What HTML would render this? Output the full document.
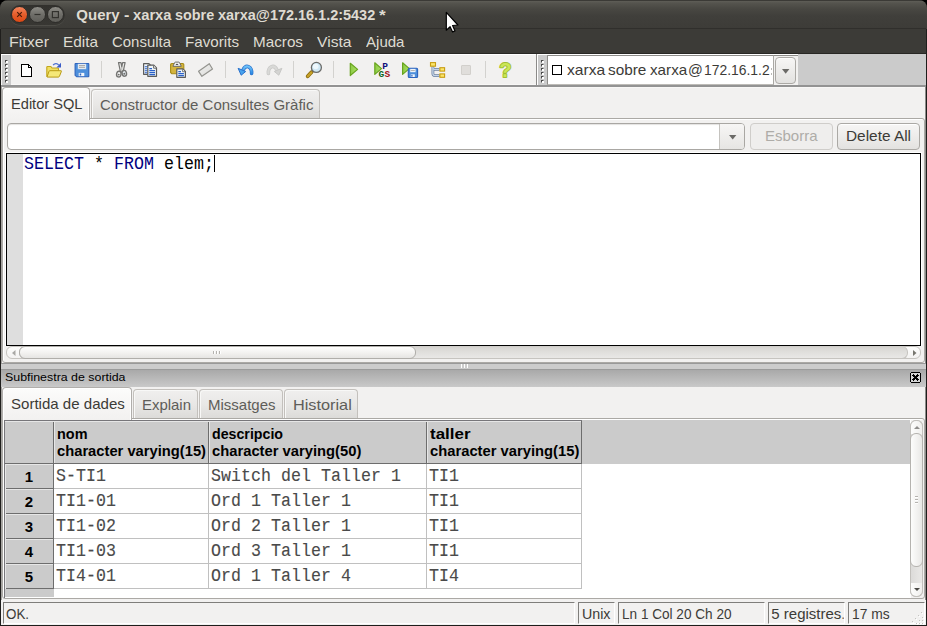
<!DOCTYPE html>
<html>
<head>
<meta charset="utf-8">
<title>Query - xarxa sobre xarxa@172.16.1.2:5432 *</title>
<style>
*{box-sizing:border-box;margin:0;padding:0}
html,body{width:927px;height:626px;overflow:hidden;background:#000}
body{position:relative;font-family:"Liberation Sans",sans-serif;font-size:15px;color:#3c3b37}
.a{position:absolute}
.t{position:absolute;white-space:nowrap;line-height:1;transform-origin:0 0}
svg{position:absolute;overflow:visible}
#frame{left:0;top:0;width:927px;height:626px;background:#1f1e1c;border-radius:8px 8px 0 0}
#title{left:0;top:0;width:927px;height:29px;background:linear-gradient(#3b3a36 0,#3b3a36 1px,#5f5e57 1px,#55544e 3px,#484742 9px,#403f3b 16px,#3d3c38 28px);border-radius:8px 8px 0 0}
#tsep{left:1px;top:28px;width:925px;height:2px;background:linear-gradient(#302f2c 50%,#42413c 50%)}
#menubar{left:1px;top:29px;width:925px;height:25px;background:#3c3b37;border-bottom:1px solid #282724}
#pill{left:10px;top:5px;width:55px;height:20px;border-radius:10px;background:linear-gradient(#32312d,#383733);box-shadow:0 1px 0 #4d4c47}
.wb{position:absolute;top:6px;width:17px;height:17px;border-radius:50%;border:1px solid #2e2d2a}
#wclose{left:11px;background:linear-gradient(#f4845c,#e55e2c 50%,#dd4814)}
#wmin,#wmax{background:linear-gradient(#8d8c86,#6f6e69 50%,#5f5e59)}
#wmin{left:29px}#wmax{left:47px}
/* toolbar */
#toolbar{left:1px;top:54px;width:925px;height:31px;background:#f2f1f0;border-top:1px solid #fff;border-bottom:1px solid #f8f7f6}
.grip{position:absolute;top:55px;width:9px;height:30px;background:#cbcbcb}
.grip i{position:absolute;left:3px;width:3px;height:3px;background:#fff;border-top:1px solid #4a4a4a;border-left:1px solid #4a4a4a}
.grip i:after{content:'';position:absolute;left:1px;top:-1px;width:1px;height:1px;background:#999;box-shadow:-2px 2px 0 #999}
#tbgrey{left:798px;top:54px;width:128px;height:32px;background:#cbcbcb}
#tbline{left:1px;top:85px;width:925px;height:2px;background:#939393}
.sep{position:absolute;top:61px;width:1px;height:17px;background:#d3d2cf}
#client{left:1px;top:87px;width:925px;height:538px;background:#f2f1f0;border-top:1px solid #f8f7f6}
/* notebook */
.nb{position:absolute;border:1px solid #aba9a5;border-radius:0 3px 3px 3px;background:#f2f1f0;box-shadow:inset 1px 1px 0 #fff}
.tab{position:absolute;border:1px solid #b0aeab;border-bottom:none;border-radius:4px 4px 0 0}
.tab.on{background:linear-gradient(#fcfcfb,#f6f5f4 60%,#f2f1f0);box-shadow:inset 1px 1px 0 #fff,inset -1px 0 0 #fff}
.tab.off{background:linear-gradient(#f0efee,#e9e8e6 50%,#dcdbd9);border-color:#c3c0bc;box-shadow:inset 1px 1px 0 #f8f8f7}
.btn{position:absolute;border:1px solid #aba9a5;border-radius:4px;background:linear-gradient(#f7f6f5,#e3e2e0);box-shadow:inset 0 1px 0 #fff}
.btn.dis{background:#efeeed;border-color:#cfcdca;box-shadow:none}
.field{position:absolute;border-top:1px solid #7f7e7b;border-left:1px solid #7f7e7b;border-right:1px solid #fff;border-bottom:1px solid #fff;top:602px;height:22px}
.cell{font-family:"Liberation Mono",monospace;font-size:16.6px;letter-spacing:.04px;color:#4a4a4a;transform:scaleY(1.07);-webkit-text-stroke:.12px #4a4a4a}

</style>
</head>
<body>
<div class="a" id="frame"></div>
<div class="a" id="title"></div>
<div class="a" id="tsep"></div>
<div class="a" id="pill"></div>
<div class="wb" id="wclose"></div><div class="wb" id="wmin"></div><div class="wb" id="wmax"></div>
<svg style="left:12px;top:7px" width="52" height="15" viewBox="0 0 52 15">
<path d="M5.200 5.200l4.600 4.600M9.800 5.200l-4.600 4.600" stroke="#4a1a08" stroke-width="1.200" fill="none"/>
<path d="M22.500 7.500h6" stroke="#33322e" stroke-width="1.200" fill="none"/>
<rect x="40.400" y="4.600" width="6" height="6" stroke="#33322e" stroke-width="1.200" fill="none"/>
</svg>
<div class="a" id="menubar"></div>
<div class="a" id="toolbar"></div>
<div class="a" id="tbgrey"></div>
<div class="a" id="tbline"></div>
<div class="grip" style="left:2px"><i style="top:5px"></i><i style="top:9px"></i><i style="top:13px"></i><i style="top:17px"></i><i style="top:21px"></i><i style="top:25px"></i></div>
<div class="a" id="client"></div>
<!-- toolbar icons: each svg is a 16x16 box -->
<svg style="left:19px;top:62px" width="16" height="16" viewBox="0 0 16 16"><path d="M2.500 2.500h7l3 3v9h-10z" fill="#fff"/><g fill="#000" shape-rendering="crispEdges"><rect x="2" y="2" width="1" height="13"/><rect x="2" y="14" width="11" height="1"/><rect x="12" y="5" width="1" height="10"/><rect x="2" y="2" width="8" height="1"/><rect x="9" y="2" width="1" height="4"/><rect x="9" y="5" width="4" height="1"/><rect x="10" y="3" width="1" height="1"/><rect x="11" y="4" width="1" height="1"/></g></svg>
<svg style="left:46px;top:62px" width="16" height="16" viewBox="0 0 16 16">
<path d="M.8 14.800V5.300q0-.8.8-.8h3.200l1.300 1.500h5.600q.8 0 .8.800v2" fill="#f0df62" stroke="#c2a51c" stroke-width="1.100"/>
<path d="M1 15l2-5.700q.2-.6.900-.6h11q.8 0 .5.700l-2 5q-.3.700-1 .700h-10.600q-1 0-.8-.1z" fill="#f5e878" stroke="#b89a14" stroke-width="1"/>
<path d="M7.200 3.200c1.300-2 4.200-2.200 5.400-.2" fill="none" stroke="#4a6fd0" stroke-width="1.400"/><path d="M15 .8v4.600h-4.600z" fill="#3a5cc8"/>
</svg>
<svg style="left:74px;top:62px" width="16" height="16" viewBox="0 0 16 16">
<path d="M1.600 1.500h12.700q.5 0 .5.500v12.300q0 .5-.5.500h-11.600l-1.600-1.500v-11.300q0-.5.500-.5z" fill="#4d8fdb" stroke="#2d63bd" stroke-width="1.100"/>
<rect x="4" y="2" width="8" height="5" fill="#eef3f8" stroke="#c5d4e6" stroke-width=".5"/><path d="M5 3.600h6M5 5.300h6" stroke="#9a9a9a" stroke-width=".9"/>
<rect x="4.700" y="10.900" width="5.600" height="3.200" fill="#f2f5fa"/><rect x="5.700" y="11.500" width="1.500" height="2" fill="#2d63bd"/>
</svg>
<div class="sep" style="left:101px"></div>
<!-- cut -->
<svg style="left:114px;top:62px" width="16" height="16" viewBox="0 0 16 16">
<path d="M4.500 .6h2.500l.8 4.400.8-4.400h2.500l-1.600 7.600v1.800h-3.400v-1.800z" fill="#eeeeec" stroke="#747472" stroke-width="1.200" stroke-linejoin="round"/>
<path d="M7.800 5v4.500" stroke="#a8a8a6" stroke-width=".8"/>
<ellipse cx="4.800" cy="12.100" rx="2.200" ry="2.900" fill="#f6f6f5" stroke="#747472" stroke-width="1.400" transform="rotate(12 4.800 12.100)"/>
<ellipse cx="10.300" cy="11.300" rx="2.200" ry="2.900" fill="#e6edf1" stroke="#747472" stroke-width="1.400" transform="rotate(-12 10.300 11.300)"/>
<circle cx="4.700" cy="12.600" r=".95" fill="#6e6e6c"/><circle cx="10.300" cy="11.700" r=".95" fill="#6e6e6c"/>
</svg>
<!-- copy -->
<svg style="left:142px;top:62px" width="16" height="16" viewBox="0 0 16 16">
<path d="M1.600 1.700h5.400l1.400 1.400v9.200h-6.800z" fill="#f0f6fa" stroke="#5c5c5a" stroke-width="1.200" stroke-linejoin="round"/><path d="M2.800 4.800h3M2.800 6.800h2.500M2.800 8.800h2.500M2.800 10.700h2.500" stroke="#2c62c8" stroke-width="1.100"/>
<path d="M5.800 3.200h6l2.700 2.700v8.400h-8.700z" fill="#eef5f9" stroke="#5c5c5a" stroke-width="1.200" stroke-linejoin="round"/><path d="M11.600 3.500v2.700h2.700" fill="#fff" stroke="#5c5c5a" stroke-width=".9"/>
<path d="M7.300 6.700h2.700M7.300 8.700h5.700M7.300 10.700h5.700M7.300 12.700h5.700" stroke="#2c62c8" stroke-width="1.200"/>
</svg>
<!-- paste -->
<svg style="left:170px;top:62px" width="16" height="16" viewBox="0 0 16 16">
<path d="M1.800 1.500h11q1 0 1 1v8.200l-1 1h-11l-1.200-1.200v-8q0-1 1.200-1z" fill="#d4b43c" stroke="#a88c18" stroke-width="1.100"/>
<path d="M2.900 4.300l1.800-3.800q.2-.4.700-.4h3.400q.5 0 .7.400l1.800 3.800z" fill="#f4f4f3" stroke="#6a6a68" stroke-width="1" stroke-linejoin="round"/><ellipse cx="7" cy="2.400" rx="1.300" ry=".7" fill="#555"/>
<path d="M6.800 6.900h6l2.600 2.600v5.800h-8.600z" fill="#eef5f9" stroke="#5c5c5a" stroke-width="1.200" stroke-linejoin="round"/><path d="M12.600 7.200v2.500h2.500" fill="#fff" stroke="#5c5c5a" stroke-width=".8"/>
<path d="M8.300 9.700h2.700M8.300 11.600h5.600M8.300 13.600h5.600" stroke="#2c62c8" stroke-width="1.200"/>
</svg>
<!-- eraser -->
<svg style="left:197px;top:62px" width="16" height="16" viewBox="0 0 16 16"><defs><linearGradient id="erg" x1="0" y1="0" x2="1" y2="1"><stop offset="0" stop-color="#f0f0ee"/><stop offset="1" stop-color="#dcdcda"/></linearGradient></defs><path d="M1.600 9.300l10.700-7.600 3.200 5.300-10.600 7.300z" fill="url(#erg)" stroke="#94948f" stroke-width="1.200" stroke-linejoin="round"/></svg>
<div class="sep" style="left:225px"></div>
<!-- undo / redo -->
<svg style="left:237px;top:62px" width="17" height="16" viewBox="0 0 17 16"><defs><linearGradient id="ug" x1="0" y1="0" x2="0" y2="1"><stop offset="0" stop-color="#6cc0f8"/><stop offset="1" stop-color="#2c8ce4"/></linearGradient></defs>
<path d="M14.600 11.400C15 5 9.300 1.400 6 8" fill="none" stroke="#2c72cc" stroke-width="3.600" stroke-linecap="round"/>
<path d="M14.600 11.400C15 5 9.300 1.400 6 8" fill="none" stroke="url(#ug)" stroke-width="2.200" stroke-linecap="round"/>
<path d="M1.100 6.300l7.600 3.200-4.500 3.700z" fill="#48a4ee" stroke="#2c72cc" stroke-width="1" stroke-linejoin="round"/></svg>
<svg style="left:266px;top:62px" width="17" height="16" viewBox="0 0 17 16"><g transform="translate(17,0) scale(-1,1)">
<path d="M14.600 11.400C15 5 9.300 1.400 6 8" fill="none" stroke="#c8c8c6" stroke-width="3.600" stroke-linecap="round"/>
<path d="M14.600 11.400C15 5 9.300 1.400 6 8" fill="none" stroke="#d9d9d7" stroke-width="2.200" stroke-linecap="round"/>
<path d="M1.100 6.300l7.600 3.200-4.500 3.700z" fill="#d4d4d2" stroke="#c8c8c6" stroke-width="1" stroke-linejoin="round"/></g></svg>
<div class="sep" style="left:293px"></div>
<!-- find -->
<svg style="left:306px;top:62px" width="16" height="16" viewBox="0 0 16 16">
<path d="M6.600 9.200l-1.400 1.500" stroke="#8c8c88" stroke-width="3" stroke-linecap="butt"/>
<path d="M5.400 10.300l-3.700 4" stroke="#8a6c10" stroke-width="3.800" stroke-linecap="round"/><path d="M5.300 10.500l-3.500 3.700" stroke="#c8a228" stroke-width="2.300" stroke-linecap="round"/>
<circle cx="10.400" cy="5.400" r="5" fill="#cfe8f5" stroke="#6c6c6a" stroke-width="1.300"/><circle cx="9.700" cy="4.500" r="2.800" fill="#eef8fd"/>
</svg>
<div class="sep" style="left:333px"></div>
<!-- execute -->
<svg style="left:346px;top:62px" width="16" height="16" viewBox="0 0 16 16"><defs><linearGradient id="gg" x1="0" y1="0" x2="1" y2="0"><stop offset="0" stop-color="#8ccc44"/><stop offset="1" stop-color="#aede66"/></linearGradient></defs><path d="M4.300 1.300l7.300 6.100-7.300 6.100z" fill="url(#gg)" stroke="#68a41e" stroke-width="1.200" stroke-linejoin="round"/></svg>
<!-- execute pgscript -->
<svg style="left:373px;top:62px" width="18" height="16" viewBox="0 0 18 16"><path d="M1.800 .8l6.700 5.800-6.700 5.800z" fill="url(#gg)" stroke="#68a41e" stroke-width="1.200" stroke-linejoin="round"/>
<text x="9.300" y="6.900" font-family="Liberation Mono" font-weight="bold" font-size="9.500" fill="#10107c">P</text>
<text x="5.600" y="15.100" font-family="Liberation Mono" font-weight="bold" font-size="9.500" fill="#0a641a">G</text>
<text x="11.500" y="15.100" font-family="Liberation Mono" font-weight="bold" font-size="9.500" fill="#a01018">S</text></svg>
<!-- execute to file -->
<svg style="left:401px;top:62px" width="18" height="16" viewBox="0 0 18 16"><path d="M1.600 .8l6.700 5.800-6.700 5.800z" fill="url(#gg)" stroke="#68a41e" stroke-width="1.200" stroke-linejoin="round"/>
<rect x="7.300" y="6.300" width="9.300" height="9.200" rx="1" fill="#4d8fdb" stroke="#2d63bd" stroke-width="1.100"/><rect x="9.200" y="6.900" width="5.400" height="3.300" fill="#eef3f8"/><path d="M9.800 8.500h4" stroke="#9a9a9a" stroke-width=".7"/><rect x="9.800" y="12.300" width="4" height="2.700" fill="#f2f5fa"/><rect x="10.300" y="12.800" width="1.200" height="1.800" fill="#2d63bd"/></svg>
<!-- explain -->
<svg style="left:429px;top:62px" width="17" height="16" viewBox="0 0 17 16">
<path d="M3.900 4.500v1.300q0 1.600 1.600 1.600h5M3.900 6v5.600q0 2 2 2h4.600" fill="none" stroke="#6c80a0" stroke-width="2.800"/>
<path d="M3.900 4.500v1.300q0 1.600 1.600 1.600h5M3.900 6v5.600q0 2 2 2h4.600" fill="none" stroke="#c4d4e8" stroke-width="1.300"/>
<rect x="1.500" y=".6" width="5" height="3.600" fill="#fbe66a" stroke="#c89c12" stroke-width="1.100"/>
<rect x="10.900" y="5.700" width="4.700" height="3.400" fill="#fbe66a" stroke="#c89c12" stroke-width="1.100"/>
<rect x="10.900" y="11.900" width="4.700" height="3.400" fill="#fbe66a" stroke="#c89c12" stroke-width="1.100"/>
</svg>
<!-- stop disabled -->
<div class="a" style="left:461px;top:65px;width:10px;height:10px;background:#e0dedb;border:1px solid #d2d0cc;border-radius:1px"></div>
<div class="sep" style="left:485px"></div>
<!-- help -->
<svg style="left:498px;top:62px" width="16" height="16" viewBox="0 0 16 16">
<text x="1.200" y="15" font-family="Liberation Sans" font-weight="bold" font-size="20" fill="#cbe656" stroke="#a0be30" stroke-width="1.800" stroke-linejoin="round" paint-order="stroke">?</text>
</svg>
<!-- second toolbar -->
<div class="a" style="left:536px;top:54px;width:1px;height:31px;background:#8b8a88"></div>
<div class="a" style="left:537px;top:54px;width:1px;height:31px;background:#fff"></div>
<div class="grip" style="left:538px"><i style="top:5px"></i><i style="top:9px"></i><i style="top:13px"></i><i style="top:17px"></i><i style="top:21px"></i><i style="top:25px"></i></div>
<div class="a" style="left:547px;top:55px;width:227px;height:30px;background:#fff;border:1px solid #8e8d8a;border-right-color:#aaa8a4;border-bottom-color:#bdbbb7"></div>
<div class="a" style="left:552px;top:65px;width:10px;height:10px;background:#fff;border:1px solid #000"></div>
<div class="a" style="left:771px;top:68px;width:1px;height:2px;background:#b9b8b5;box-shadow:0 5px 0 #b9b8b5"></div>
<div class="a" style="left:774px;top:55px;width:24px;height:30px;background:#f2f1f0;border-top:1px solid #8e8d8a"></div>
<div class="btn" style="left:775px;top:57px;width:21px;height:27px;border-radius:4px"></div>
<svg style="left:782px;top:69px" width="8" height="5" viewBox="0 0 8 5"><path d="M0 0h7.400l-3.700 4.800z" fill="#6b6a67"/></svg>
<!-- left/right inner frame lines -->
<div class="a" style="left:1px;top:87px;width:1px;height:513px;background:#a5a3a0"></div>
<div class="a" style="left:925px;top:87px;width:1px;height:513px;background:#8d8c89"></div>
<!-- top notebook -->
<div class="nb" style="left:2px;top:118px;width:923px;height:245px"></div>
<div class="tab off" style="left:91px;top:89px;width:229px;height:29px"></div>
<div class="tab on" style="left:2px;top:87px;width:88px;height:33px"></div>
<!-- query combo -->
<div class="a" style="left:7px;top:123px;width:738px;height:27px;background:#fff;border:1px solid #a9a7a3;border-radius:4px;box-shadow:inset 0 1px 1px #e4e3e1"></div>
<div class="a" style="left:719px;top:124px;width:25px;height:25px;background:linear-gradient(#f7f6f5,#e6e5e3);border-left:1px solid #c5c3bf;border-radius:0 3px 3px 0"></div>
<svg style="left:729px;top:135px" width="8" height="5" viewBox="0 0 8 5"><path d="M0 0h7.400l-3.700 4.600z" fill="#6b6a67"/></svg>
<div class="btn dis" style="left:750px;top:123px;width:83px;height:27px"></div>
<div class="btn" style="left:837px;top:123px;width:83px;height:27px"></div>
<!-- editor -->
<div class="a" style="left:5px;top:152px;width:917px;height:194px;background:#fff"></div>
<div class="a" style="left:6px;top:153px;width:915px;height:193px;background:#fff;border:1px solid #000"></div>
<div class="a" style="left:7px;top:154px;width:16px;height:191px;background:#dedede"></div>
<div class="t" style="left:24px;top:155.7px;font-family:'Liberation Mono',monospace;font-size:16.6px;letter-spacing:.04px;color:#000;transform:scaleY(1.07)"><span style="color:#00007f">SELECT</span> * <span style="color:#00007f">FROM</span> elem;</div>
<div class="a" style="left:214px;top:155px;width:1px;height:17px;background:#000"></div>
<!-- editor h scrollbar -->
<div class="a" style="left:6px;top:346px;width:915px;height:13px;background:linear-gradient(#fdfdfc,#f3f2f1);border-radius:6px;border:1px solid #c6c4c0"></div>
<div class="a" style="left:19px;top:346px;width:889px;height:13px;background:linear-gradient(#d6d4d1,#dfdedb 40%,#e9e8e6);border-radius:6px;border:1px solid #c6c4c0;border-top-color:#cfcdc9"></div>
<div class="a" style="left:19px;top:346px;width:397px;height:13px;background:linear-gradient(#fefefd,#f1f0ee 60%,#e6e5e3);border-radius:6px;border:1px solid #b0aeaa"></div>
<svg style="left:12px;top:349.500px" width="4" height="6" viewBox="0 0 4 6"><path d="M3.500 0v6l-3.500-3z" fill="#a9a8a5"/></svg>
<svg style="left:913px;top:349.500px" width="4" height="6" viewBox="0 0 4 6"><path d="M0 0v6l3.500-3z" fill="#77766f"/></svg>
<div class="a" style="left:213px;top:351px;width:1px;height:3px;background:#b5b3af;box-shadow:3px 0 0 #b5b3af,6px 0 0 #b5b3af,1px 0 0 #fff,4px 0 0 #fff,7px 0 0 #fff"></div>
<!-- sash + caption -->
<div class="a" style="left:1px;top:363px;width:925px;height:6px;background:#cccccc;border-top:1px solid #999"></div>
<div class="a" style="left:461px;top:364px;width:1px;height:4px;background:#fff;box-shadow:3px 0 0 #fff,6px 0 0 #fff"></div>
<div class="a" style="left:1px;top:369px;width:925px;height:18px;background:linear-gradient(#a9a9a9,#c9c9c9);border-top:1px solid #9b9b9b"></div>
<svg style="left:910px;top:372px" width="11" height="11" viewBox="0 0 11 11" shape-rendering="crispEdges"><rect x="1" y="1" width="9" height="9" fill="#d6d6d6"/><g fill="#000"><rect x="1" y="0" width="9" height="1"/><rect x="1" y="10" width="9" height="1"/><rect x="0" y="1" width="1" height="9"/><rect x="10" y="1" width="1" height="9"/><rect x="3" y="2" width="1" height="1"/><rect x="7" y="2" width="1" height="1"/><rect x="2" y="3" width="1" height="1"/><rect x="3" y="3" width="1" height="1"/><rect x="4" y="3" width="1" height="1"/><rect x="6" y="3" width="1" height="1"/><rect x="7" y="3" width="1" height="1"/><rect x="8" y="3" width="1" height="1"/><rect x="3" y="4" width="1" height="1"/><rect x="4" y="4" width="1" height="1"/><rect x="5" y="4" width="1" height="1"/><rect x="6" y="4" width="1" height="1"/><rect x="7" y="4" width="1" height="1"/><rect x="4" y="5" width="1" height="1"/><rect x="5" y="5" width="1" height="1"/><rect x="6" y="5" width="1" height="1"/><rect x="3" y="6" width="1" height="1"/><rect x="4" y="6" width="1" height="1"/><rect x="5" y="6" width="1" height="1"/><rect x="6" y="6" width="1" height="1"/><rect x="7" y="6" width="1" height="1"/><rect x="2" y="7" width="1" height="1"/><rect x="3" y="7" width="1" height="1"/><rect x="4" y="7" width="1" height="1"/><rect x="6" y="7" width="1" height="1"/><rect x="7" y="7" width="1" height="1"/><rect x="8" y="7" width="1" height="1"/><rect x="3" y="8" width="1" height="1"/><rect x="7" y="8" width="1" height="1"/></g></svg>
<!-- bottom notebook -->
<div class="nb" style="left:2px;top:418px;width:923px;height:181px"></div>
<div class="tab off" style="left:133px;top:389px;width:65px;height:29px"></div>
<div class="tab off" style="left:199px;top:389px;width:84px;height:29px"></div>
<div class="tab off" style="left:284px;top:389px;width:74px;height:29px"></div>
<div class="tab on" style="left:2px;top:387px;width:130px;height:33px"></div>
<!-- grid -->
<div class="a" style="left:4px;top:420px;width:907px;height:178px;background:#fff;border-left:1px solid #77767a"></div>
<div class="a" style="left:4px;top:420px;width:578px;height:1px;background:#77767a"></div>
<div class="a" style="left:582px;top:420px;width:328px;height:1px;background:#cbcbcb"></div>
<div class="a" style="left:5px;top:421px;width:905px;height:43px;background:#cbcbcb"></div>
<div class="a" style="left:5px;top:421px;width:48px;height:176px;background:#cbcbcb"></div>
<div class="a" style="left:5px;top:589px;width:49px;height:8px;background:#cbcbcb"></div>
<div class="a" style="left:5px;top:463px;width:577px;height:1px;background:#6d6d6d"></div>
<div class="a" style="left:53px;top:421px;width:1px;height:42px;background:#6d6d6d"></div>
<div class="a" style="left:208px;top:421px;width:1px;height:42px;background:#6d6d6d"></div>
<div class="a" style="left:426px;top:421px;width:1px;height:42px;background:#6d6d6d"></div>
<div class="a" style="left:581px;top:421px;width:1px;height:42px;background:#6d6d6d"></div>
<div class="a" style="left:54px;top:421px;width:1px;height:42px;background:#e6e6e6"></div>
<div class="a" style="left:209px;top:421px;width:1px;height:42px;background:#e6e6e6"></div>
<div class="a" style="left:427px;top:421px;width:1px;height:42px;background:#e6e6e6"></div>
<div class="a" style="left:5px;top:421px;width:576px;height:1px;background:#e6e6e6"></div>
<div class="a" style="left:53px;top:464px;width:1px;height:125px;background:#6d6d6d"></div>
<div class="a" style="left:5px;top:488px;width:48px;height:1px;background:#6d6d6d"></div>
<div class="a" style="left:5px;top:464px;width:48px;height:1px;background:#e6e6e6"></div>
<div class="a" style="left:54px;top:488px;width:528px;height:1px;background:#c0c0c0"></div>
<div class="a" style="left:5px;top:513px;width:48px;height:1px;background:#6d6d6d"></div>
<div class="a" style="left:5px;top:489px;width:48px;height:1px;background:#e6e6e6"></div>
<div class="a" style="left:54px;top:513px;width:528px;height:1px;background:#c0c0c0"></div>
<div class="a" style="left:5px;top:538px;width:48px;height:1px;background:#6d6d6d"></div>
<div class="a" style="left:5px;top:514px;width:48px;height:1px;background:#e6e6e6"></div>
<div class="a" style="left:54px;top:538px;width:528px;height:1px;background:#c0c0c0"></div>
<div class="a" style="left:5px;top:563px;width:48px;height:1px;background:#6d6d6d"></div>
<div class="a" style="left:5px;top:539px;width:48px;height:1px;background:#e6e6e6"></div>
<div class="a" style="left:54px;top:563px;width:528px;height:1px;background:#c0c0c0"></div>
<div class="a" style="left:5px;top:588px;width:48px;height:1px;background:#6d6d6d"></div>
<div class="a" style="left:5px;top:564px;width:48px;height:1px;background:#e6e6e6"></div>
<div class="a" style="left:54px;top:588px;width:528px;height:1px;background:#c0c0c0"></div>
<div class="a" style="left:5px;top:464px;width:1px;height:125px;background:#e6e6e6"></div>
<div class="a" style="left:208px;top:464px;width:1px;height:125px;background:#c0c0c0"></div>
<div class="a" style="left:426px;top:464px;width:1px;height:125px;background:#c0c0c0"></div>
<div class="a" style="left:581px;top:464px;width:1px;height:125px;background:#c0c0c0"></div>
<div class="t cell" style="left:56px;top:468.2px">S-TI1</div>
<div class="t cell" style="left:211px;top:468.2px">Switch del Taller 1</div>
<div class="t cell" style="left:429px;top:468.2px">TI1</div>
<div class="t cell" style="left:56px;top:493.2px">TI1-01</div>
<div class="t cell" style="left:211px;top:493.2px">Ord 1 Taller 1</div>
<div class="t cell" style="left:429px;top:493.2px">TI1</div>
<div class="t cell" style="left:56px;top:518.2px">TI1-02</div>
<div class="t cell" style="left:211px;top:518.2px">Ord 2 Taller 1</div>
<div class="t cell" style="left:429px;top:518.2px">TI1</div>
<div class="t cell" style="left:56px;top:543.2px">TI1-03</div>
<div class="t cell" style="left:211px;top:543.2px">Ord 3 Taller 1</div>
<div class="t cell" style="left:429px;top:543.2px">TI1</div>
<div class="t cell" style="left:56px;top:568.2px">TI4-01</div>
<div class="t cell" style="left:211px;top:568.2px">Ord 1 Taller 4</div>
<div class="t cell" style="left:429px;top:568.2px">TI4</div>
<div class="a" style="left:910px;top:420px;width:13px;height:177px;background:linear-gradient(90deg,#dcdbd9,#e9e8e6);border:1px solid #c2c0bc;border-radius:6px"></div>
<div class="a" style="left:910px;top:420px;width:13px;height:14px;background:linear-gradient(90deg,#fdfdfc,#f0efed);border:1px solid #c2c0bc;border-bottom:none;border-radius:6px 6px 0 0"></div>
<div class="a" style="left:910px;top:583px;width:13px;height:14px;background:linear-gradient(90deg,#fdfdfc,#f0efed);border:1px solid #c2c0bc;border-top:none;border-radius:0 0 6px 6px"></div>
<div class="a" style="left:910px;top:433px;width:13px;height:134px;background:linear-gradient(90deg,#fdfdfc,#e9e8e6);border:1px solid #b5b3af;border-radius:6px"></div>
<svg style="left:914px;top:426px" width="6" height="3" viewBox="0 0 6 3"><path d="M0 3h6l-3-3z" fill="#8f8e8b"/></svg>
<svg style="left:914px;top:588px" width="6" height="3" viewBox="0 0 6 3"><path d="M0 0h6l-3 3z" fill="#4b4a46"/></svg>
<div class="a" style="left:915px;top:496px;width:3px;height:1px;background:#b5b3af;box-shadow:0 3px 0 #b5b3af,0 6px 0 #b5b3af,0 1px 0 #fff,0 4px 0 #fff,0 7px 0 #fff"></div>
<!-- status -->
<div class="field" style="left:3px;width:572px"></div>
<div class="field" style="left:578px;width:37px"></div>
<div class="field" style="left:618px;width:147px"></div>
<div class="field" style="left:768px;width:77px"></div>
<div class="field" style="left:848px;width:77px"></div>
<div class="a" style="left:921px;top:612px;width:1px;height:1px;background:#c4c3c0;box-shadow:1px 1px 0 #fff,-3px 3px 0 #c4c3c0,-2px 4px 0 #fff,1px 5px 0 #c4c3c0,2px 6px 0 #fff,-6px 6px 0 #c4c3c0,-5px 7px 0 #fff,-2px 8px 0 #c4c3c0,-1px 9px 0 #fff,1px 8px 0 #c4c3c0,2px 9px 0 #fff,-9px 9px 0 #c4c3c0,-8px 10px 0 #fff,-5px 11px 0 #c4c3c0,-4px 12px 0 #fff,-2px 11px 0 #c4c3c0,-1px 12px 0 #fff,1px 11px 0 #c4c3c0,2px 12px 0 #fff"></div>
<svg style="left:445px;top:11px" width="15" height="22" viewBox="0 0 15 22"><path d="M1.300 1.400L1.300 19.200L5.100 15.700L7.600 20.900L10 19.900L7.600 14.500L12.900 14z" fill="#fff" stroke="#000" stroke-width="1.200" stroke-linejoin="round"/></svg>

<div class="t" style="left:76.30px;top:7.30px;font-size:15px;color:#dfdbd2;font-weight:bold;">Query</div>
<div class="t" style="left:124.30px;top:7.30px;font-size:15px;color:#dfdbd2;font-weight:bold;transform:scaleX(1.0800);">-</div>
<div class="t" style="left:132.50px;top:7.30px;font-size:15px;color:#dfdbd2;font-weight:bold;transform:scaleX(0.9817);">xarxa</div>
<div class="t" style="left:175.00px;top:7.30px;font-size:15px;color:#dfdbd2;font-weight:bold;transform:scaleX(0.9594);">sobre</div>
<div class="t" style="left:217.50px;top:7.30px;font-size:15px;color:#dfdbd2;font-weight:bold;transform:scaleX(0.9638);">xarxa@172.16.1.2:5432</div>
<div class="t" style="left:379.30px;top:7.30px;font-size:15px;color:#dfdbd2;font-weight:bold;transform:scaleX(1.1465);">*</div>
<div class="t" style="left:9.00px;top:34.30px;font-size:15px;color:#dfdbd2;transform:scaleX(1.0667);">Fitxer</div>
<div class="t" style="left:62.50px;top:34.30px;font-size:15px;color:#dfdbd2;transform:scaleX(1.0233);">Edita</div>
<div class="t" style="left:112.00px;top:34.30px;font-size:15px;color:#dfdbd2;transform:scaleX(0.9966);">Consulta</div>
<div class="t" style="left:184.50px;top:34.30px;font-size:15px;color:#dfdbd2;transform:scaleX(1.0123);">Favorits</div>
<div class="t" style="left:253.00px;top:34.30px;font-size:15px;color:#dfdbd2;transform:scaleX(1.0165);">Macros</div>
<div class="t" style="left:317.00px;top:34.30px;font-size:15px;color:#dfdbd2;transform:scaleX(1.0430);">Vista</div>
<div class="t" style="left:366.00px;top:34.30px;font-size:15px;color:#dfdbd2;transform:scaleX(1.0033);">Ajuda</div>
<div class="t" style="left:566.80px;top:61.80px;font-size:15px;color:#3c3b37;transform:scaleX(1.0412);">xarxa</div>
<div class="t" style="left:608.00px;top:61.80px;font-size:15px;color:#3c3b37;transform:scaleX(1.0231);">sobre</div>
<div class="t" style="left:650.20px;top:61.80px;font-size:15px;color:#3c3b37;transform:scaleX(1.0140);">xarxa</div>
<div class="t" style="left:688.00px;top:61.80px;font-size:15px;color:#3c3b37;transform:scaleX(0.9715);">@</div>
<div class="t" style="left:704.30px;top:61.80px;font-size:15px;color:#3c3b37;transform:scaleX(0.9266);">172.16.1.2</div>
<div class="t" style="left:11.00px;top:96.30px;font-size:15px;color:#3c3b37;transform:scaleX(0.9744);">Editor SQL</div>
<div class="t" style="left:100.00px;top:97.30px;font-size:15px;color:#5e5d59;">Constructor de Consultes Gràfic</div>
<div class="t" style="left:765.00px;top:128.30px;font-size:15px;color:#aeaca8;">Esborra</div>
<div class="t" style="left:846.00px;top:128.30px;font-size:15px;color:#3c3b37;transform:scaleX(1.0256);">Delete All</div>
<div class="t" style="left:5.00px;top:372.17px;font-size:11.5px;color:#000;transform:scaleX(1.0771);">Subfinestra de sortida</div>
<div class="t" style="left:11.00px;top:396.30px;font-size:15px;color:#3c3b37;transform:scaleX(1.0033);">Sortida de dades</div>
<div class="t" style="left:142.00px;top:397.30px;font-size:15px;color:#5e5d59;transform:scaleX(0.9959);">Explain</div>
<div class="t" style="left:208.00px;top:397.30px;font-size:15px;color:#5e5d59;">Missatges</div>
<div class="t" style="left:293.00px;top:397.30px;font-size:15px;color:#5e5d59;transform:scaleX(1.0851);">Historial</div>
<div class="t" style="left:57.30px;top:425.80px;font-size:15px;color:#000;font-weight:bold;transform:scaleX(0.9630);">nom</div>
<div class="t" style="left:57.30px;top:442.90px;font-size:15px;color:#000;font-weight:bold;transform:scaleX(0.9819);">character varying(15)</div>
<div class="t" style="left:212.00px;top:425.80px;font-size:15px;color:#000;font-weight:bold;transform:scaleX(0.9463);">descripcio</div>
<div class="t" style="left:212.00px;top:442.90px;font-size:15px;color:#000;font-weight:bold;transform:scaleX(0.9839);">character varying(50)</div>
<div class="t" style="left:429.50px;top:425.80px;font-size:15px;color:#000;font-weight:bold;transform:scaleX(1.1294);">taller</div>
<div class="t" style="left:429.50px;top:442.90px;font-size:15px;color:#000;font-weight:bold;transform:scaleX(0.9839);">character varying(15)</div>
<div class="t" style="top:469.30px;font-size:15px;color:#000;font-weight:bold;left:5px;width:48px;text-align:center;">1</div>
<div class="t" style="top:494.30px;font-size:15px;color:#000;font-weight:bold;left:5px;width:48px;text-align:center;">2</div>
<div class="t" style="top:519.30px;font-size:15px;color:#000;font-weight:bold;left:5px;width:48px;text-align:center;">3</div>
<div class="t" style="top:544.30px;font-size:15px;color:#000;font-weight:bold;left:5px;width:48px;text-align:center;">4</div>
<div class="t" style="top:569.30px;font-size:15px;color:#000;font-weight:bold;left:5px;width:48px;text-align:center;">5</div>
<div class="t" style="left:6.30px;top:605.80px;font-size:15px;color:#3c3b37;transform:scaleX(0.8900);">OK.</div>
<div class="t" style="left:581.50px;top:605.80px;font-size:15px;color:#3c3b37;transform:scaleX(0.9495);">Unix</div>
<div class="t" style="left:621.50px;top:605.80px;font-size:15px;color:#3c3b37;transform:scaleX(0.9055);">Ln 1 Col 20 Ch 20</div>
<div class="t" style="left:771.30px;top:605.80px;font-size:15px;color:#3c3b37;clip-path:inset(-5px 2.5% -5px 0);">5 registres.</div>
<div class="t" style="left:852.30px;top:605.80px;font-size:15px;color:#3c3b37;transform:scaleX(0.9227);">17 ms</div>
</body>
</html>
